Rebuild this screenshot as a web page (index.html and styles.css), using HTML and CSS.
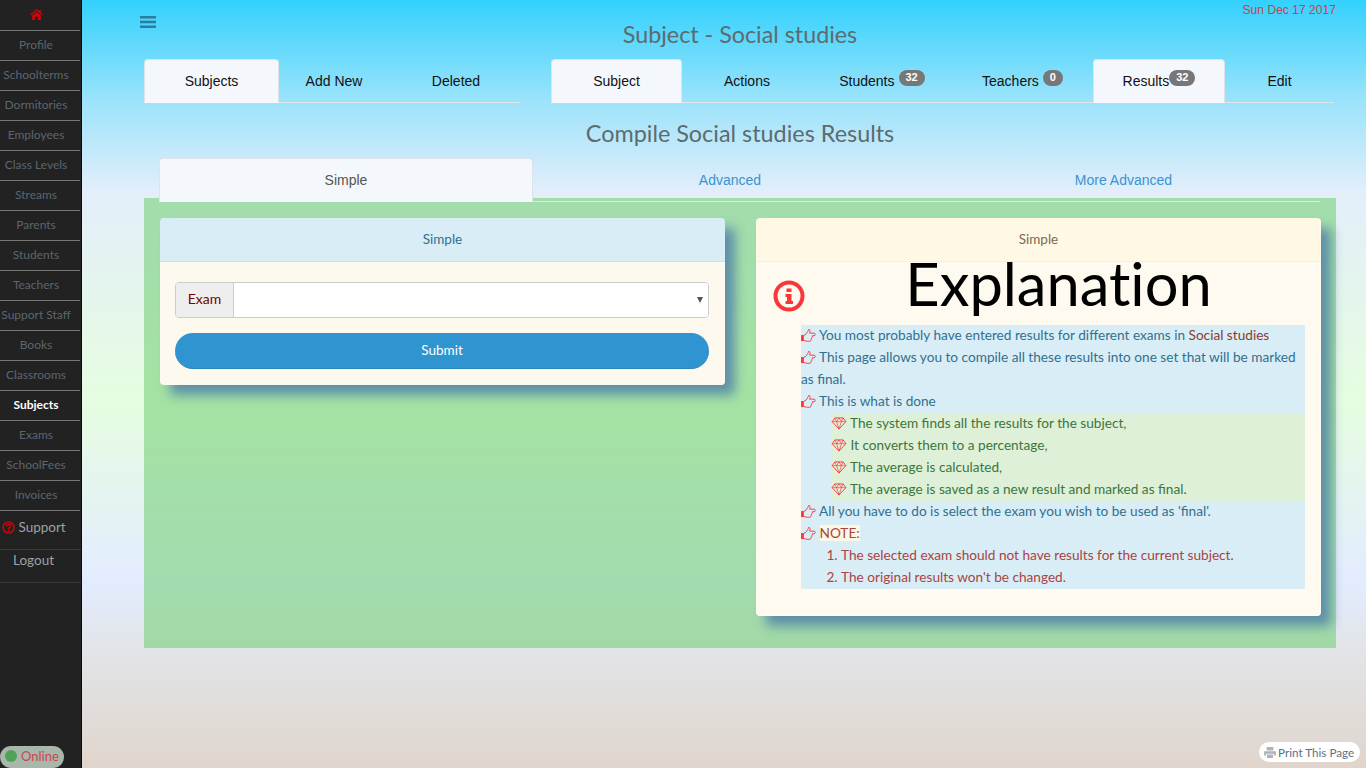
FILE: index.html
```html
<!DOCTYPE html>
<html lang="en">
<head>
    <meta charset="UTF-8">
    <meta name="viewport" content="width=device-width, initial-scale=1.0">
    <title>Compile Social studies Results</title>
    <link rel="stylesheet" href="styles.css">
</head>
<body>
    <svg class="defs" width="0" height="0" aria-hidden="true">
        <symbol id="hand" viewBox="0 0 32 28">
            <path d="M0 13h6v13H0z" fill="currentColor"/>
            <path d="M6 13.500c4-.5 6-4.500 8-7.500 1.500-2 1.500-3.500 2-5 3-.5 4 2 3.200 4.500L18.500 9H28c3.500 0 3.500 5.500 0 5.500h-3.500c.5 2-.5 3.500-1.500 4 .5 2-.5 3.500-1.500 4 .3 2.500-1 4-3.500 4h-4c-3 0-5-1.500-8-1.500" fill="none" stroke="currentColor" stroke-width="2"/>
        </symbol>
        <symbol id="gem" viewBox="0 0 16 14">
            <path d="M3.600 1h8.800L15.400 5 8 13 .6 5z" fill="none" stroke="currentColor" stroke-width="1"/>
            <path d="M.6 5h14.800M3.600 1 5.400 5 8 13l2.600-8 1.800-4M5.400 5 8 1l2.600 4" fill="none" stroke="currentColor" stroke-width=".7"/>
        </symbol>
    </svg>

    <nav class="sidebar">
        <ul class="side-menu">
            <li class="home">
                <svg viewBox="0 0 14 12" width="13" height="11"><path d="M7 0 0 6l.8 1L7 1.800 13.200 7l.8-1-2.200-1.900V1h-2v1.400zM2.200 7.200V12h3.300V8.500h3V12h3.300V7.200L7 3.200z" fill="#c9060c"/></svg>
            </li>
            <li>Profile</li>
            <li>Schoolterms</li>
            <li>Dormitories</li>
            <li>Employees</li>
            <li>Class Levels</li>
            <li>Streams</li>
            <li>Parents</li>
            <li>Students</li>
            <li>Teachers</li>
            <li>Support Staff</li>
            <li>Books</li>
            <li>Classrooms</li>
            <li class="active">Subjects</li>
            <li>Exams</li>
            <li>SchoolFees</li>
            <li>Invoices</li>
        </ul>
        <div class="side-link support">
            <svg viewBox="0 0 14 14" width="13" height="13"><circle cx="7" cy="7" r="5.900" fill="none" stroke="#c9060c" stroke-width="1.600"/><path d="M4.900 5.600c0-2.700 4.300-2.800 4.300-.1 0 1.700-2.100 1.600-2.100 3" fill="none" stroke="#c9060c" stroke-width="1.500"/><rect x="6.200" y="9.400" width="1.700" height="1.600" fill="#c9060c"/></svg>
            Support
        </div>
        <div class="side-link logout">Logout</div>
        <div class="online"><span class="dot"></span>Online</div>
    </nav>

    <main class="content">
        <div class="date">Sun Dec 17 2017</div>
        <header class="topbar">
            <svg class="bars" viewBox="0 0 16 14" width="16" height="14"><path d="M0 1h16v2.400H0zM0 5.800h16v2.400H0zM0 10.600h16V13H0z" fill="#2a7f9e"/></svg>
            <h1>Subject - Social studies</h1>
        </header>

        <div class="tabrows">
            <ul class="tabs tabs-left">
                <li class="on">Subjects</li>
                <li>Add New</li>
                <li class="nudge">Deleted</li>
            </ul>
            <ul class="tabs tabs-right">
                <li class="on">Subject</li>
                <li>Actions</li>
                <li>Students <span class="badge">32</span></li>
                <li>Teachers <span class="badge">0</span></li>
                <li class="on tight">Results<span class="badge">32</span></li>
                <li>Edit</li>
            </ul>
        </div>

        <h2>Compile Social studies Results</h2>

        <ul class="tabs tabs-sub">
            <li class="on">Simple</li>
            <li>Advanced</li>
            <li>More Advanced</li>
        </ul>

        <section class="green">
            <div class="panel panel-form">
                <div class="panel-head">Simple</div>
                <div class="panel-body">
                    <div class="field">
                        <span class="addon">Exam</span>
                        <span class="select"><span class="caret"></span></span>
                    </div>
                    <button class="submit" type="button">Submit</button>
                </div>
            </div>

            <div class="panel panel-info">
                <div class="panel-head">Simple</div>
                <div class="panel-body">
                    <div class="explain-top">
                        <svg class="info" viewBox="0 0 34 34" width="34" height="34"><circle cx="17" cy="17" r="13.500" fill="none" stroke="#f8373b" stroke-width="4"/><path d="M14.500 9.500h5v3.500h-5zM13.500 15h6v7h1.500v3h-7.500v-3h1.500v-4h-1.500z" fill="#f8373b"/></svg>
                        <div class="explain-title">Explanation</div>
                    </div>
                    <div class="notes">
                        <p><svg class="ic"><use href="#hand"/></svg> You most probably have entered results for different exams in <span class="subj">Social studies</span></p>
                        <p><svg class="ic"><use href="#hand"/></svg> This page allows you to compile all these results into one set that will be marked</p>
                        <p>as final.</p>
                        <p><svg class="ic"><use href="#hand"/></svg> This is what is done</p>
                        <div class="steps">
                            <p><svg class="ic"><use href="#gem"/></svg> The system finds all the results for the subject,</p>
                            <p><svg class="ic"><use href="#gem"/></svg> It converts them to a percentage,</p>
                            <p><svg class="ic"><use href="#gem"/></svg> The average is calculated,</p>
                            <p><svg class="ic"><use href="#gem"/></svg> The average is saved as a new result and marked as final.</p>
                        </div>
                        <p><svg class="ic"><use href="#hand"/></svg> All you have to do is select the exam you wish to be used as 'final'.</p>
                        <p><svg class="ic"><use href="#hand"/></svg> <span class="note">NOTE:</span></p>
                        <ol>
                            <li>The selected exam should not have results for the current subject.</li>
                            <li>The original results won't be changed.</li>
                        </ol>
                    </div>
                </div>
            </div>
        </section>

        <div class="print">
            <svg viewBox="0 0 14 13" width="12" height="11"><path d="M3 0h8v4H3zM0 5h14v5h-2.500V8h-9v2H0zM3.500 9h7v4h-7z" fill="#b0b4b8"/></svg>
            Print This Page
        </div>
    </main>
</body>
</html>
```

FILE: styles.css
```css
* {
    box-sizing: border-box;
}

html, body {
    height: 100%;
}

body {
    margin: 0;
    display: flex;
    overflow: hidden;
    font: 14px "Liberation Sans", Arial, sans-serif;
    background: linear-gradient(#33d1fd 0, #9be3fb 100px, #e3eefa 192px, #e6fde0 400px, #e3ecff 580px, #e2e4e8 650px, #e0d5cc 768px);
}

ul, ol {
    list-style: none;
    margin: 0;
    padding: 0;
}

p {
    margin: 0;
}

.defs {
    position: absolute;
}

/* Sidebar */
.sidebar {
    position: relative;
    width: 82px;
    flex: none;
    background-color: #222;
    border-right: 1px solid #0b0b0b;
    font-family: Lato, sans-serif;
    color: #5b6670;
}

.side-menu {
    padding-top: 1px;
}

.side-menu li {
    height: 30px;
    margin-right: 1px;
    padding-right: 8px;
    border-bottom: 1px solid #777;
    font-size: 12px;
    line-height: 28px;
    text-align: center;
    white-space: nowrap;
}

.side-menu li.home {
    display: flex;
    align-items: center;
    justify-content: center;
    padding-bottom: 2px;
}

.side-menu li.active {
    color: #fff;
    font-weight: bold;
}

.side-link {
    color: #9da3a6;
    font-size: 13.500px;
    border-bottom: 1px solid #3a3a3a;
}

.side-link.support {
    height: 39px;
    padding: 8px 0 0 2px;
}

.side-link.support svg {
    vertical-align: -2px;
}

.side-link.logout {
    height: 33px;
    padding-top: 2px;
    padding-left: 13px;
}

.online {
    position: absolute;
    left: 0;
    bottom: 0;
    width: 64px;
    height: 22px;
    padding: 0 0 2px 5px;
    display: flex;
    align-items: center;
    gap: 4px;
    border-radius: 11px;
    background-color: #a9b6ab;
    color: #c9474f;
    font-size: 13px;
}

.dot {
    width: 12px;
    height: 12px;
    border-radius: 50%;
    background-color: #4fa357;
}

/* Main column */
.content {
    position: relative;
    flex: 1;
    padding: 0 30px 0 62px;
}

.date {
    position: absolute;
    top: 3px;
    right: 30px;
    font-size: 12.100px;
    color: #c0474f;
}

.topbar {
    position: relative;
    height: 59px;
    text-align: center;
}

.bars {
    position: absolute;
    left: -4px;
    top: 15px;
}

h1, h2 {
    margin: 0;
    font-family: Lato, sans-serif;
    font-weight: normal;
    color: #5d6b6f;
}

h1 {
    padding-top: 20px;
    font-size: 23.300px;
    line-height: 29px;
}

h2 {
    height: 55px;
    padding-top: 17px;
    font-size: 23.400px;
    line-height: 27px;
    text-align: center;
}

.tabrows {
    display: flex;
    justify-content: space-between;
    padding-right: 2px;
}

.tabs {
    display: grid;
    height: 44px;
    border-bottom: 1px solid #dde3e8;
    color: #111;
}

.tabs li {
    display: flex;
    align-items: center;
    justify-content: center;
    gap: 4px;
    height: 44px;
    border: 1px solid transparent;
    border-radius: 4px 4px 0 0;
}

.tabs li.on {
    background-color: #f4f7fb;
    border-color: #dde3e8;
    border-bottom-color: transparent;
}

.tabs li.tight {
    gap: 0;
}

.tabs li.nudge {
    padding-left: 3px;
}

.tabs-left {
    width: 376px;
    grid-template-columns: 135px 110px 131px;
}

.tabs-right {
    width: 783px;
    grid-template-columns: 131px 130px 140px 141px 132px 109px;
}

.badge {
    align-self: flex-start;
    margin-top: 10px;
    min-width: 16px;
    padding: 2px 7px 3px;
    border-radius: 10px;
    background-color: #777;
    color: #fff;
    font-size: 11px;
    font-weight: bold;
    line-height: 11px;
    text-align: center;
}

.tabs-sub {
    position: relative;
    z-index: 1;
    width: 1161px;
    margin: 0 0 -4px 15px;
    grid-template-columns: 374px 394px 393px;
    color: #3a93d3;
}

.tabs-sub li.on {
    color: #555;
}

/* Green area with the two panels */
.green {
    display: grid;
    grid-template-columns: 565px 565px;
    justify-content: space-between;
    align-items: start;
    height: 450px;
    padding: 20px 15px 0 16px;
    background-color: rgba(120, 208, 122, 0.6);
}

.panel {
    border-radius: 4px;
    overflow: hidden;
    box-shadow: 10px 10px 12px #5e8fa8;
    font-family: Lato, sans-serif;
}

.panel-head {
    height: 44px;
    font-size: 13.500px;
    line-height: 43px;
    text-align: center;
}

.panel-form .panel-head {
    background-color: #d9edf7;
    border-bottom: 1px solid #bce8f1;
    color: #31708f;
}

.panel-form .panel-body {
    height: 123px;
    padding: 20px 16px 0 15px;
    background-color: #fef9ee;
}

.field {
    display: flex;
    height: 36px;
    border: 1px solid #ccc;
    border-radius: 4px;
    overflow: hidden;
}

.addon {
    width: 58px;
    background-color: #eee;
    border-right: 1px solid #ccc;
    color: #700;
    font-size: 14px;
    line-height: 31px;
    text-align: center;
}

.select {
    position: relative;
    flex: 1;
    background-color: #fff;
}

.caret {
    position: absolute;
    right: 5px;
    top: 14px;
    border-style: solid;
    border-width: 6px 3px 0;
    border-color: #555 transparent transparent;
}

.submit {
    display: block;
    width: 100%;
    height: 36px;
    margin-top: 15px;
    padding-bottom: 3px;
    border: 0;
    border-bottom: 1px solid #2a86bd;
    border-radius: 18px;
    background-color: #3094d0;
    color: #fff;
    font: 13.500px Lato, sans-serif;
}

.panel-info .panel-head {
    background-color: #fef8e5;
    border-bottom: 1px solid #f7eedb;
    color: #7d6a4f;
}

.panel-info .panel-body {
    height: 354px;
    padding: 0 16px 0 45px;
    background-color: #fffaf0;
}

.explain-top {
    position: relative;
    height: 63px;
}

.info {
    position: absolute;
    left: -29px;
    top: 17px;
}

.explain-title {
    padding-left: 11px;
    color: #000;
    font: 59.600px/42px Lato, sans-serif;
    font-variant-ligatures: none;
    text-align: center;
}

.notes {
    background-color: #d9edf7;
    color: #31708f;
    font-size: 13.640px;
}

.notes p, .notes li {
    height: 22px;
    line-height: 20px;
    white-space: nowrap;
}

.ic {
    width: 15px;
    height: 13px;
    color: #f8373b;
    vertical-align: -2px;
}

.steps .ic {
    width: 16px;
}

.subj {
    color: #8a3b30;
}

.steps {
    margin-left: 30px;
    background-color: #dff0d8;
    color: #3c763d;
}

.note {
    background-color: #fcf8e3;
    color: #a94442;
}

.notes ol {
    list-style: decimal;
    padding-left: 40px;
    color: #a94442;
}

.print {
    position: absolute;
    right: 6px;
    bottom: 6px;
    width: 101px;
    height: 20px;
    padding-left: 5px;
    display: flex;
    align-items: center;
    gap: 2px;
    border-radius: 10px;
    background-color: #fff;
    color: #5e6f86;
    font-family: Lato, sans-serif;
    font-size: 11.700px;
    white-space: nowrap;
}
```
